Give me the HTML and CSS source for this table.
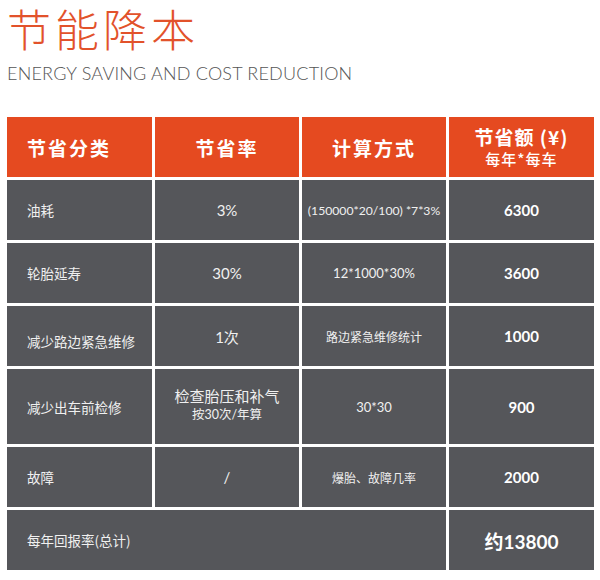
FILE: index.html
```html
<!DOCTYPE html>
<html lang="zh-CN">
<head>
<meta charset="utf-8">
<title>节能降本</title>
<link rel="stylesheet" href="styles.css">
</head>
<body>
<div class="page">
  <header class="head">
    <h1 class="title">节能降本</h1>
    <p class="subtitle">ENERGY SAVING AND COST REDUCTION</p>
  </header>
  <div class="table">
    <div class="cell th left">节省分类</div>
    <div class="cell th">节省率</div>
    <div class="cell th">计算方式</div>
    <div class="cell th two"><span class="th-main">节省额 (¥)</span><span class="th-sub">每年*每车</span></div>

    <div class="cell left">油耗</div>
    <div class="cell rate">3%</div>
    <div class="cell calc tight">(150000*20/100) *7*3%</div>
    <div class="cell num">6300</div>

    <div class="cell left">轮胎延寿</div>
    <div class="cell rate">30%</div>
    <div class="cell calc">12*1000*30%</div>
    <div class="cell num">3600</div>

    <div class="cell left low">减少路边紧急维修</div>
    <div class="cell rate">1次</div>
    <div class="cell calc small">路边紧急维修统计</div>
    <div class="cell num">1000</div>

    <div class="cell left">减少出车前检修</div>
    <div class="cell rate two"><span class="rate-main">检查胎压和补气</span><span class="rate-sub">按30次/年算</span></div>
    <div class="cell calc">30*30</div>
    <div class="cell num">900</div>

    <div class="cell left">故障</div>
    <div class="cell rate">/</div>
    <div class="cell calc small">爆胎、故障几率</div>
    <div class="cell num">2000</div>

    <div class="cell left span3">每年回报率(总计)</div>
    <div class="cell num big">约13800</div>
  </div>
</div>
</body>
</html>
```
FILE: styles.css
```css
* { box-sizing: border-box; }
html, body { margin: 0; padding: 0; }
body {
  width: 600px;
  height: 580px;
  overflow: hidden;
  background: #ffffff;
  font-family: Lato, "Noto Sans CJK SC", sans-serif;
}
.page {
  padding: 0 7px;
  display: flex;
  flex-direction: column;
}
.head {
  display: flex;
  flex-direction: column;
}
.title {
  margin: 0;
  padding-top: 0;
  font-family: "Noto Sans CJK SC", sans-serif;
  font-weight: 300;
  font-size: 44px;
  line-height: 56px;
  letter-spacing: 4px;
  color: #e2522b;
}
.subtitle {
  margin: 0;
  padding-top: 6px;
  font-family: Lato, sans-serif;
  font-weight: 300;
  font-size: 18px;
  line-height: 22px;
  color: #555;
  letter-spacing: 0.2px;
}
.table {
  margin-top: 33px;
  display: grid;
  grid-template-columns: 145px 144px 144px 145px;
  grid-template-rows: 60px 60px 60px 60px 75px 60px 60px;
  gap: 3px;
}
.cell {
  background: #55565a;
  color: #f0f0f0;
  display: flex;
  align-items: center;
  justify-content: center;
  text-align: center;
  font-family: Lato, "Noto Sans CJK SC", sans-serif;
  font-size: 14px;
}
.cell.left {
  justify-content: flex-start;
  padding-left: 20px;
  font-family: "Noto Sans CJK SC", sans-serif;
  font-size: 13.5px;
}
.cell.low { padding-top: 10px; }
.th {
  background: #e54a20;
  color: #fff;
  font-family: "Noto Sans CJK SC", sans-serif;
  font-weight: 700;
  font-size: 19px;
  letter-spacing: 2px;
}
.th.left { font-size: 19px; }
.two {
  flex-direction: column;
}
.th-main {
  font-size: 19px;
  line-height: 24px;
  letter-spacing: 1px;
}
.th-sub {
  font-size: 15px;
  line-height: 20px;
  letter-spacing: 1px;
  font-weight: 500;
}
.rate { font-size: 15px; }
.rate.two { padding-bottom: 4px; }
.rate-main {
  font-family: "Noto Sans CJK SC", sans-serif;
  font-size: 15px;
  line-height: 20px;
}
.rate-sub {
  font-family: Lato, "Noto Sans CJK SC", sans-serif;
  font-size: 12.5px;
  line-height: 18px;
}
.calc { font-size: 13px; }
.calc.tight { font-size: 12.2px; }
.calc.small {
  font-family: "Noto Sans CJK SC", sans-serif;
  font-size: 12px;
}
.num {
  font-weight: 700;
  font-size: 15px;
  color: #fff;
}
.num.big {
  font-size: 19px;
}
.span3 {
  grid-column: 1 / span 3;
}
```
